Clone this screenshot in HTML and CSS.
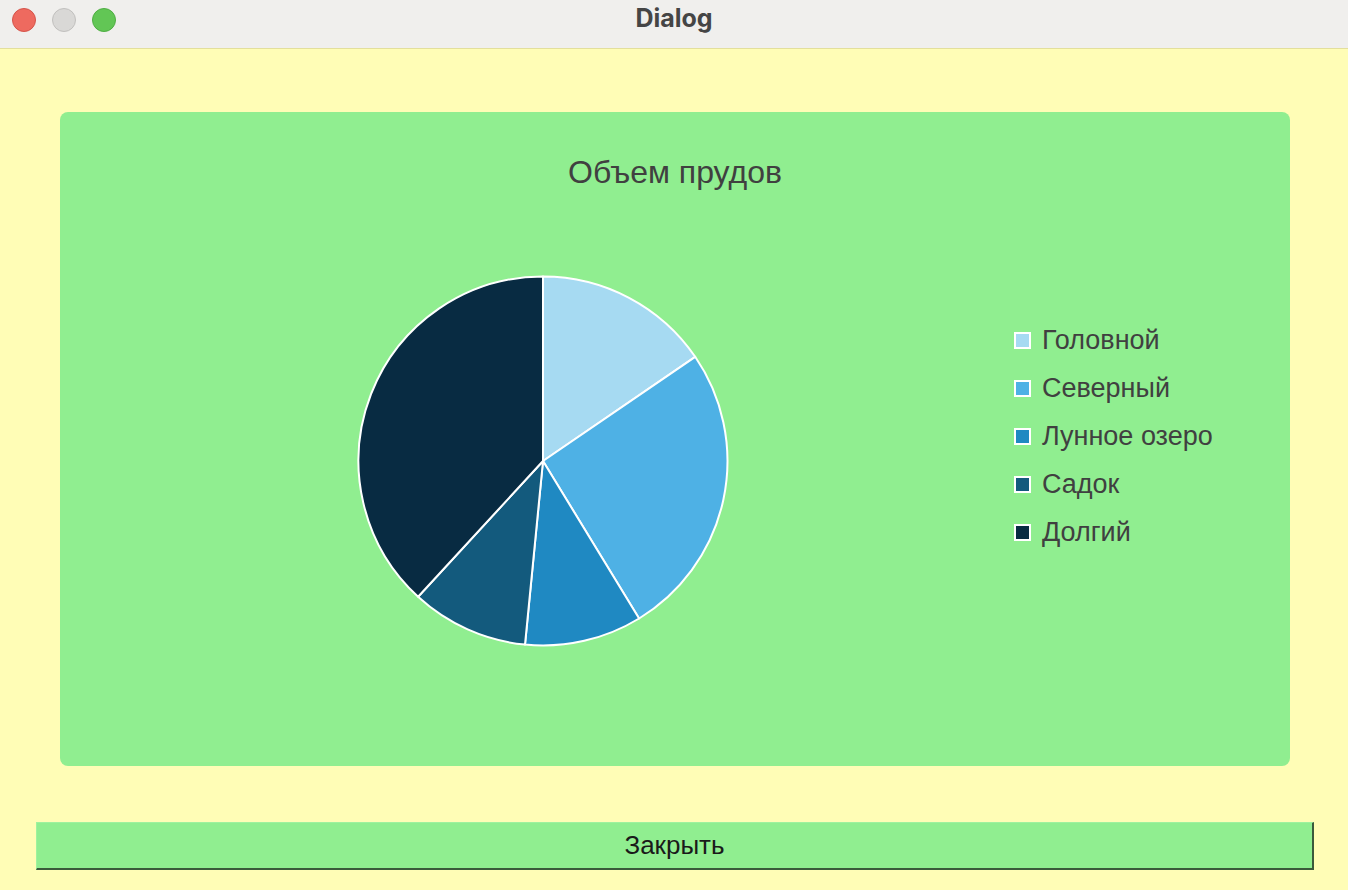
FILE: index.html
```html
<!DOCTYPE html>
<html lang="ru">
<head>
<meta charset="utf-8">
<title>Dialog</title>
<link rel="stylesheet" href="styles.css">
</head>
<body>
<div class="titlebar">
  <div class="lights">
    <span class="light red"></span>
    <span class="light gray"></span>
    <span class="light green"></span>
  </div>
  <div class="wintitle">Dialog</div>
</div>
<div class="content">
  <div class="card">
    <div class="chart-title">Объем прудов</div>
    <div class="chart-row">
      <svg class="pie" width="372" height="372" viewBox="0 0 372 372">
        <g stroke="#ffffff" stroke-width="2" stroke-linejoin="round">
          <path fill="#a6daf2" d="M186 186 L186 1.5 A184.5 184.5 0 0 1 338.2 81.8 Z"/>
          <path fill="#4eb1e5" d="M186 186 L338.2 81.8 A184.5 184.5 0 0 1 282.1 343.5 Z"/>
          <path fill="#1f89c2" d="M186 186 L282.1 343.5 A184.5 184.5 0 0 1 168 369.6 Z"/>
          <path fill="#135a7d" d="M186 186 L168 369.6 A184.5 184.5 0 0 1 61.1 321.8 Z"/>
          <path fill="#082b42" d="M186 186 L61.1 321.8 A184.5 184.5 0 0 1 186 1.5 Z"/>
        </g>
      </svg>
      <ul class="legend">
        <li><span class="sw c1"></span>Головной</li>
        <li><span class="sw c2"></span>Северный</li>
        <li><span class="sw c3"></span>Лунное озеро</li>
        <li><span class="sw c4"></span>Садок</li>
        <li><span class="sw c5"></span>Долгий</li>
      </ul>
    </div>
  </div>
  <button class="close-btn">Закрыть</button>
</div>
</body>
</html>
```
FILE: styles.css
```css
html, body {
  margin: 0;
  padding: 0;
}
body {
  width: 1348px;
  height: 890px;
  background: #fffdb6;
  font-family: "Liberation Sans", Arial, sans-serif;
  overflow: hidden;
}
.titlebar {
  height: 48px;
  background: #f0efed;
  border-bottom: 1px solid #e3df9c;
  display: flex;
  align-items: center;
  position: relative;
}
.lights {
  display: flex;
  gap: 16px;
  padding-left: 12px;
  margin-top: -8px;
}
.light {
  width: 24px;
  height: 24px;
  border-radius: 50%;
  box-sizing: border-box;
}
.light.red { background: #ee6a5f; border: 1px solid #d5544a; }
.light.gray { background: #d9d8d6; border: 1px solid #c1c0be; }
.light.green { background: #62c655; border: 1px solid #4fae43; }
.wintitle {
  position: absolute;
  left: 0;
  right: 0;
  top: 3px;
  text-align: center;
  font-family: Inter, "Open Sans", sans-serif;
  font-weight: 700;
  font-size: 25px;
  color: #454545;
}
.content {
  display: flex;
  flex-direction: column;
  align-items: flex-start;
}
.card {
  margin: 63px 0 0 60px;
  width: 1230px;
  height: 654px;
  background: #90ee90;
  border-radius: 8px;
  box-sizing: border-box;
  display: flex;
  flex-direction: column;
}
.chart-title {
  margin-top: 42px;
  text-align: center;
  font-size: 32px;
  color: #404040;
  line-height: 36px;
}
.chart-row {
  display: flex;
  align-items: flex-start;
  margin-top: 85px;
  padding-left: 297px;
}
.pie {
  display: block;
  flex: none;
}
.legend {
  list-style: none;
  margin: 50px 0 0 285px;
  padding: 0;
  display: flex;
  flex-direction: column;
  gap: 18px;
}
.legend li {
  display: flex;
  align-items: center;
  height: 30px;
  font-size: 27px;
  color: #404040;
}
.sw {
  width: 17px;
  height: 17px;
  box-sizing: border-box;
  border: 2px solid #ffffff;
  margin-right: 11px;
  flex: none;
}
.c1 { background: #a6daf2; }
.c2 { background: #4eb1e5; }
.c3 { background: #1f89c2; }
.c4 { background: #135a7d; }
.c5 { background: #082b42; }
.close-btn {
  margin: 56px 0 0 36px;
  width: 1278px;
  height: 48px;
  background: #90ee90;
  border: none;
  border-top: 1px solid #9ef29e;
  border-left: 1px solid #9ef29e;
  border-right: 2px solid #3b5a3b;
  border-bottom: 2px solid #3b5a3b;
  font-family: "Liberation Sans", Arial, sans-serif;
  font-size: 26px;
  color: #1a1a1a;
  padding: 0;
}
```
